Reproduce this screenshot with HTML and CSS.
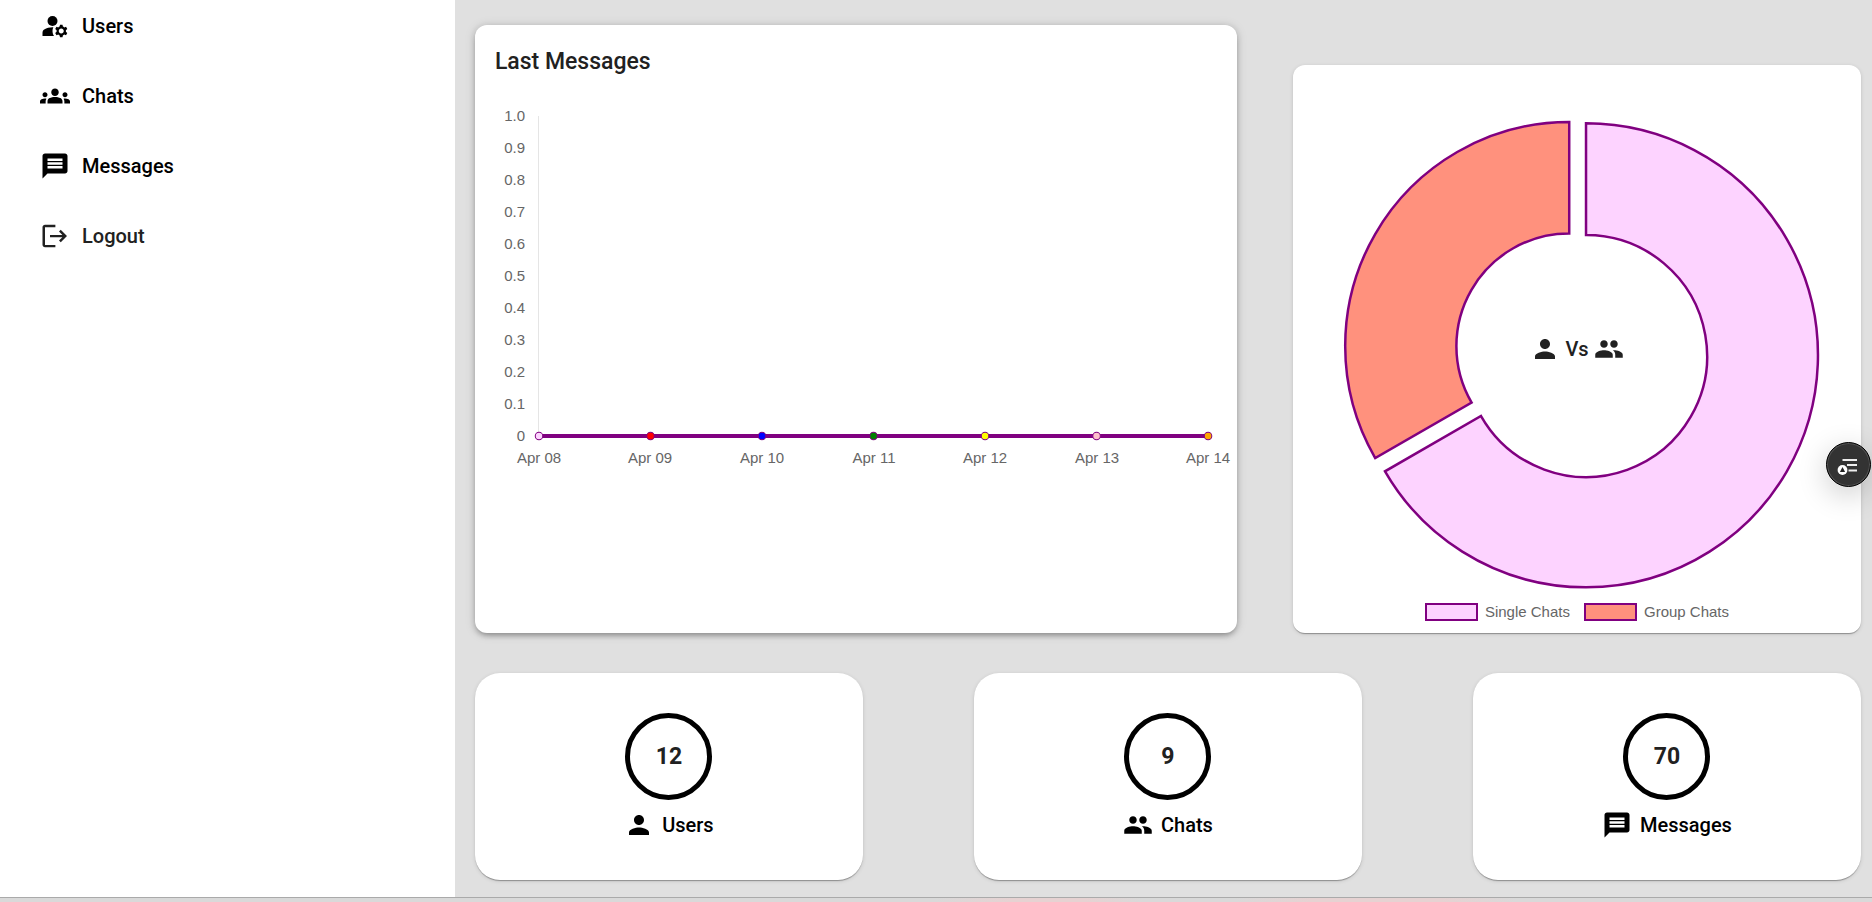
FILE: index.html
```html
<!DOCTYPE html>
<html lang="en">
<head>
<meta charset="utf-8">
<title>Dashboard</title>
<link rel="stylesheet" href="styles.css">
</head>
<body>
<svg class="defs" aria-hidden="true">
  <symbol id="i-manage" viewBox="0 0 24 24"><circle cx="10" cy="8" r="4"/><path d="M10.67 13.02C10.45 13.01 10.23 13 10 13c-2.42 0-4.68.67-6.61 1.82-.88.52-1.39 1.5-1.39 2.53V20h9.26c-.79-1.13-1.26-2.51-1.26-4 0-1.07.25-2.07.67-2.98zM20.75 16c0-.22-.03-.42-.06-.63l1.14-1.01-1-1.73-1.45.49c-.32-.27-.68-.48-1.08-.63L18 11h-2l-.3 1.49c-.4.15-.76.36-1.08.63l-1.45-.49-1 1.73 1.14 1.01c-.03.21-.06.41-.06.63s.03.42.06.63l-1.14 1.01 1 1.73 1.45-.49c.32.27.68.48 1.08.63L16 21h2l.3-1.49c.4-.15.76-.36 1.08-.63l1.45.49 1-1.73-1.14-1.01c.03-.21.06-.41.06-.63zM17 18c-1.1 0-2-.9-2-2s.9-2 2-2 2 .9 2 2-.9 2-2 2z"/></symbol>
  <symbol id="i-groups" viewBox="0 0 24 24"><path d="M12 12.75c1.63 0 3.07.39 4.24.9 1.08.48 1.76 1.56 1.76 2.73V18H6v-1.61c0-1.18.68-2.26 1.76-2.73 1.17-.52 2.61-.91 4.24-.91zM4 13c1.1 0 2-.9 2-2s-.9-2-2-2-2 .9-2 2 .9 2 2 2zm1.13 1.1c-.37-.06-.74-.1-1.13-.1-.99 0-1.93.21-2.78.58C.48 14.9 0 15.62 0 16.43V18h4.5v-1.61c0-.83.23-1.61.63-2.29zM20 13c1.1 0 2-.9 2-2s-.9-2-2-2-2 .9-2 2 .9 2 2 2zm4 3.43c0-.81-.48-1.53-1.22-1.85-.85-.37-1.79-.58-2.78-.58-.39 0-.76.04-1.13.1.4.68.63 1.46.63 2.29V18H24v-1.57zM12 6c1.66 0 3 1.34 3 3s-1.34 3-3 3-3-1.34-3-3 1.34-3 3-3z"/></symbol>
  <symbol id="i-message" viewBox="0 0 24 24"><path d="M20 2H4c-1.1 0-1.99.9-1.99 2L2 22l4-4h14c1.1 0 2-.9 2-2V4c0-1.1-.9-2-2-2zm-2 12H6v-2h12v2zm0-3H6V9h12v2zm0-3H6V6h12v2z"/></symbol>
  <symbol id="i-exit" viewBox="0 0 24 24"><path d="m16.600 7-1.400 1.400 2.700 2.700H8v1.800h9.900l-2.700 2.700 1.400 1.400 5-5zM12.300 3H4c-1.100 0-2 .9-2 2v14c0 1.100.9 2 2 2h8.300v-1.900H4V4.900h8.300z"/></symbol>
  <symbol id="i-person" viewBox="0 0 24 24"><path d="M12 12c2.210 0 4-1.790 4-4s-1.790-4-4-4-4 1.790-4 4 1.790 4 4 4zm0 2c-2.670 0-8 1.340-8 4v2h16v-2c0-2.660-5.330-4-8-4z"/></symbol>
  <symbol id="i-people" viewBox="0 0 24 24"><path d="M16 11c1.660 0 2.990-1.340 2.990-3S17.660 5 16 5s-3 1.340-3 3 1.340 3 3 3zm-8 0c1.660 0 2.990-1.340 2.990-3S9.660 5 8 5 5 6.340 5 8s1.340 3 3 3zm0 2c-2.330 0-7 1.170-7 3.500V19h14v-2.500c0-2.330-4.670-3.500-7-3.500zm8 0c-.29 0-.62.020-.97.050 1.160.840 1.970 1.970 1.970 3.450V19h6v-2.500c0-2.330-4.670-3.500-7-3.500z"/></symbol>
</svg>

<div class="layout">
  <nav class="sidebar">
    <a class="nav-link" href="#users"><svg class="icon"><use href="#i-manage"/></svg>Users</a>
    <a class="nav-link" href="#chats"><svg class="icon"><use href="#i-groups"/></svg>Chats</a>
    <a class="nav-link" href="#messages"><svg class="icon"><use href="#i-message"/></svg>Messages</a>
    <a class="nav-link nav-link-soft" href="#logout"><svg class="icon"><use href="#i-exit"/></svg>Logout</a>
  </nav>

  <main class="main">
    <div class="charts">
      <section class="card card-line">
        <h2 class="title">Last Messages</h2>
        <svg class="line-chart" viewBox="0 0 722 384" role="img" aria-label="Messages per day">
          <path class="axis" d="M43.500 20V340"/>
          <g class="tick tick-y">
            <text x="30" y="25">1.0</text><text x="30" y="57">0.9</text><text x="30" y="89">0.8</text>
            <text x="30" y="121">0.7</text><text x="30" y="153">0.6</text><text x="30" y="185">0.5</text>
            <text x="30" y="217">0.4</text><text x="30" y="249">0.3</text><text x="30" y="281">0.2</text>
            <text x="30" y="313">0.1</text><text x="30" y="345">0</text>
          </g>
          <g class="tick tick-x">
            <text x="44" y="367">Apr 08</text><text x="155" y="367">Apr 09</text><text x="267" y="367">Apr 10</text>
            <text x="379" y="367">Apr 11</text><text x="490" y="367">Apr 12</text><text x="602" y="367">Apr 13</text>
            <text x="713" y="367">Apr 14</text>
          </g>
          <path class="series" d="M44 340H713"/>
          <g class="dots">
            <circle cx="44" cy="340" r="3.750" fill="#fdd3ff"/>
            <circle cx="155.500" cy="340" r="3.750" fill="red"/>
            <circle cx="267" cy="340" r="3.750" fill="blue"/>
            <circle cx="378.500" cy="340" r="3.750" fill="green"/>
            <circle cx="490" cy="340" r="3.750" fill="yellow"/>
            <circle cx="601.500" cy="340" r="3.750" fill="pink"/>
            <circle cx="713" cy="340" r="3.750" fill="orange"/>
          </g>
        </svg>
      </section>

      <section class="card card-donut">
        <svg class="donut" viewBox="0 0 568 530" role="img" aria-label="Single chats and group chats">
          <path fill="#fdd3ff" d="M293 58.300A232 232 0 1 1 92 406.300L188 351A121 121 0 1 0 293 170z"/>
          <path fill="#ff917d" d="M276.200 57A224 224 0 0 0 82.200 393L178.600 337.500A112.500 112.500 0 0 1 276.200 168.500z"/>
        </svg>
        <div class="legend">
          <span class="key"><span class="swatch swatch-single"></span>Single Chats</span>
          <span class="key"><span class="swatch swatch-group"></span>Group Chats</span>
        </div>
        <div class="versus"><svg class="icon"><use href="#i-person"/></svg><span>Vs</span><svg class="icon"><use href="#i-people"/></svg></div>
      </section>
    </div>

    <div class="stats">
      <section class="card stat">
        <div class="count">12</div>
        <div class="stat-label"><svg class="icon"><use href="#i-person"/></svg>Users</div>
      </section>
      <section class="card stat">
        <div class="count">9</div>
        <div class="stat-label"><svg class="icon"><use href="#i-people"/></svg>Chats</div>
      </section>
      <section class="card stat">
        <div class="count">70</div>
        <div class="stat-label"><svg class="icon"><use href="#i-message"/></svg>Messages</div>
      </section>
    </div>
  </main>
</div>
<div class="strip"></div>

<button class="fab" type="button" aria-label="Open reading list">
  <svg class="fab-icon" viewBox="0 0 24 24"><path d="M5.500 7H20M10 12h10M11.500 17.500H20" stroke="#eee" stroke-width="2"/><circle cx="5.500" cy="17" r="4.900" fill="#fff"/><path d="m5.500 14 2.600 5H2.900z" fill="#222"/></svg>
</button>
</body>
</html>
```

FILE: styles.css
```css
* { box-sizing: border-box; }
html, body { height: 100%; }
body {
  margin: 0;
  display: flex;
  flex-direction: column;
  overflow: hidden;
  font-family: Roboto, sans-serif;
  font-size: 20px;
  font-weight: 500;
  line-height: 30px;
  color: #212121;
  background: #e0e0e0;
}
.defs { position: absolute; width: 0; height: 0; }
.icon { width: 30px; height: 30px; fill: currentColor; flex: none; }

.layout { flex: 1; display: flex; min-height: 0; }
.sidebar {
  flex: 0 0 24.3%;
  background: #fff;
  padding: 11px 40px;
  display: flex;
  flex-direction: column;
  gap: 40px;
}
.nav-link {
  display: flex;
  align-items: center;
  gap: 12px;
  color: #000;
  text-decoration: none;
}
.nav-link-soft { color: #212121; }

.main {
  flex: 1;
  min-width: 0;
  padding: 25px 11px 0 20px;
  display: flex;
  flex-direction: column;
  gap: 40px;
}
.card {
  background: #fff;
  box-shadow: 0 2px 1px -1px rgba(0,0,0,.2), 0 1px 1px rgba(0,0,0,.14), 0 1px 4px rgba(0,0,0,.12);
}
.charts {
  display: grid;
  grid-template-columns: minmax(0, 762fr) minmax(0, 568fr);
  gap: 56px;
  align-items: end;
}
.card-line {
  align-self: stretch;
  border-radius: 12px;
  padding: 20px;
  min-height: 608px;
  box-shadow: 0 4px 5px -2px rgba(0,0,0,.2), 0 2px 6px rgba(0,0,0,.18), 0 1px 12px rgba(0,0,0,.12);
}
.title { margin: 0 0 17px; font-size: 23px; font-weight: 500; line-height: 34px; }
.line-chart { display: block; width: 100%; overflow: visible; }
.axis { stroke: #e5e5e5; fill: none; }
.tick { font: 15px "Liberation Sans", Arial, sans-serif; fill: #666; }
.tick-y { text-anchor: end; }
.tick-x { text-anchor: middle; }
.series { stroke: purple; stroke-width: 4px; }
.dots { stroke: purple; stroke-width: 1px; }

.card-donut {
  position: relative;
  border-radius: 12px;
  padding-bottom: 4px;
}
.donut { display: block; width: 100%; }
.donut path { stroke: purple; stroke-width: 2.5px; }
.legend {
  display: flex;
  justify-content: center;
  gap: 14px;
  font-family: "Liberation Sans", Arial, sans-serif;
  font-size: 15px;
  font-weight: 400;
  line-height: 34px;
  color: #666;
}
.key { display: flex; align-items: center; gap: 7px; }
.swatch { width: 53px; height: 18px; border: 2px solid purple; }
.swatch-single { background: #fdd3ff; }
.swatch-group { background: #ff917d; }
.versus {
  position: absolute;
  inset: 0;
  display: flex;
  align-items: center;
  justify-content: center;
  gap: 5px;
}

.stats { display: flex; justify-content: space-between; }
.stat {
  flex: 0 0 28%;
  border-radius: 25px;
  padding: 40px 0;
  display: flex;
  flex-direction: column;
  align-items: center;
  gap: 10px;
}
.count {
  width: 87px;
  height: 87px;
  border: 5px solid #000;
  border-radius: 50%;
  display: grid;
  place-items: center;
  font-size: 23px;
  font-weight: 700;
}
.stat-label { display: flex; align-items: center; gap: 8px; color: #000; }

.strip {
  flex: 0 0 5px;
  border-top: 1px solid #aaa;
  background: linear-gradient(90deg, #d9d9d9 50%, #e6d2d2 54%, #e6d2d2 58%, #d9d9d9 61%, #d9d9d9 66%, #e6d2d2 70%, #e6d2d2 77%, #d9d9d9 81%);
}

.fab {
  position: fixed;
  right: 1px;
  top: 442px;
  width: 45px;
  height: 45px;
  padding: 0;
  border: 1px solid #000;
  border-radius: 50%;
  background: #333;
  box-shadow: inset 0 0 0 1px #555, 0 8px 30px rgba(0,0,0,.2);
  display: grid;
  place-items: center;
}
.fab-icon { width: 24px; height: 24px; fill: none; }
```
